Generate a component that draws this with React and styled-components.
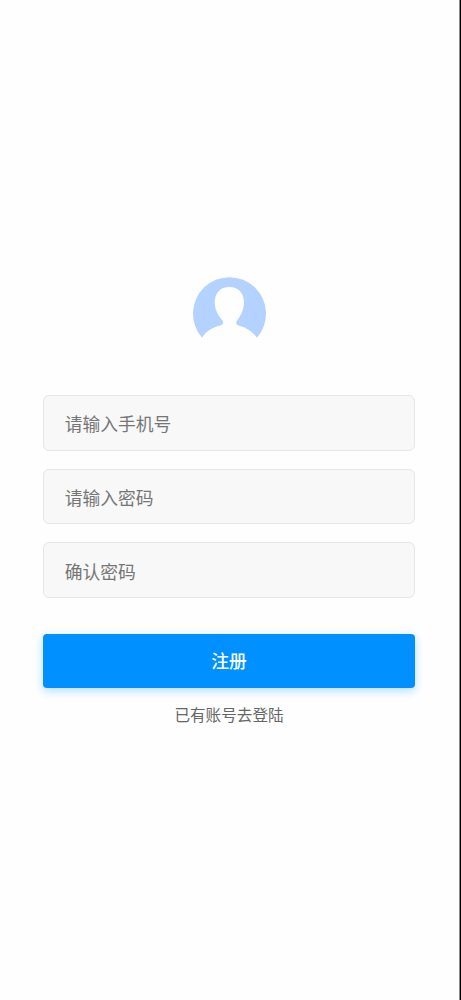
import React, { useState } from "react";
import styled, { createGlobalStyle } from "styled-components";

const GlobalStyle = createGlobalStyle`
  * {
    box-sizing: border-box;
  }

  body {
    margin: 0;
    background: #fefefe;
    font-family: "Noto Sans CJK SC", sans-serif;
  }
`;

const Page = styled.main`
  width: 100%;
  min-height: 1000px;
  display: flex;
  flex-direction: column;
  align-items: center;
  padding: 276px 45px 0 43px;
  border-right: 1px solid #000;
  box-shadow: inset -1px 0 0 #8a8a8a;
`;

const Avatar = styled.svg`
  width: 74px;
  height: 74px;
  margin-bottom: 45px;
`;

const Form = styled.form`
  width: 100%;
  display: flex;
  flex-direction: column;
  gap: 18px;
`;

const Input = styled.input`
  width: 100%;
  height: 55.7px;
  padding: 1px 20px 0 20.7px;
  border: 1px solid #e6e6e6;
  border-radius: 6px;
  background: #f8f8f8;
  color: #333;
  font-family: inherit;
  font-size: 17.8px;
  outline: none;

  &::placeholder {
    color: #757575;
    opacity: 1;
  }
`;

const SubmitButton = styled.button`
  width: 100%;
  height: 54px;
  margin-top: 17.6px;
  padding: 0 0 2px;
  border: none;
  border-radius: 4px;
  background: #0090ff;
  color: #fff;
  font-family: inherit;
  font-size: 17.8px;
  font-weight: 500;
  box-shadow: 0 3px 10px rgba(0, 144, 255, 0.3);
  cursor: pointer;
`;

const LoginLink = styled.a`
  margin-top: 15px;
  color: #666;
  font-size: 15.6px;
  line-height: 22px;
  cursor: pointer;
`;

const App = () => {
  const [phone, setPhone] = useState("");
  const [password, setPassword] = useState("");
  const [confirm, setConfirm] = useState("");

  return (
    <>
      <GlobalStyle />
      <Page>
        <Avatar viewBox="0 0 74 74" aria-hidden="true">
          <path
            fill="#b4d2ff"
            d="M10 61.700A36.500 36.500 0 1 1 65 61.700C60.500 55.500 54.500 52 46.800 49.600C44.600 48.800 43.800 47.500 44.600 45.200C48.500 40 52 34 52 26C52 17 46 11 37.300 11C28.500 11 22.700 17 22.700 26C22.700 34 26.500 40 30.500 44.500C31.800 46.500 31.200 48.400 29 49.200C21.500 51.200 14 54.500 10 61.700Z"
          />
        </Avatar>
        <Form onSubmit={(e) => e.preventDefault()}>
          <Input
            type="tel"
            placeholder="请输入手机号"
            value={phone}
            onChange={(e) => setPhone(e.target.value)}
          />
          <Input
            type="password"
            placeholder="请输入密码"
            value={password}
            onChange={(e) => setPassword(e.target.value)}
          />
          <Input
            type="password"
            placeholder="确认密码"
            value={confirm}
            onChange={(e) => setConfirm(e.target.value)}
          />
          <SubmitButton type="submit">注册</SubmitButton>
        </Form>
        <LoginLink>已有账号去登陆</LoginLink>
      </Page>
    </>
  );
};

export default App;
